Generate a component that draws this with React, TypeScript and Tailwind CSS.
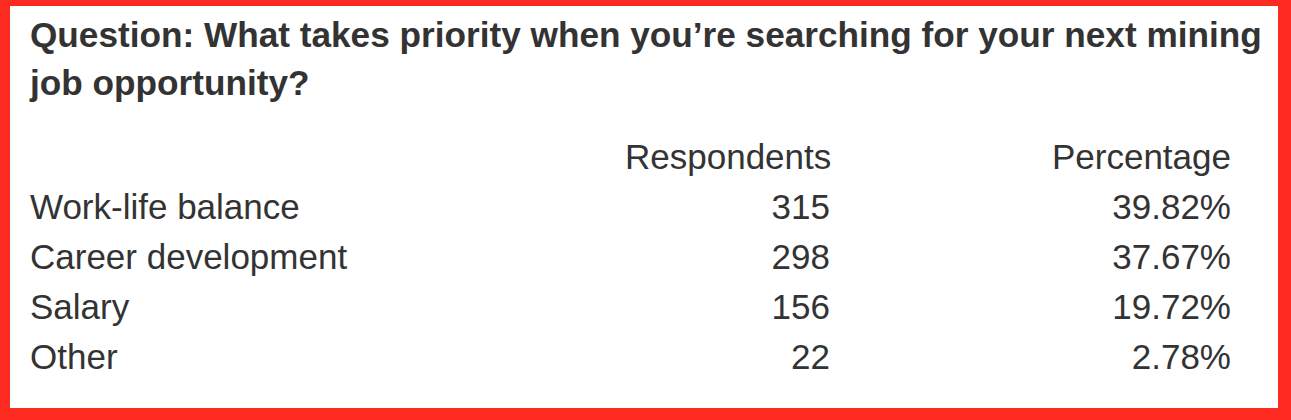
const ROWS = [
  { label: 'Work-life balance', count: 315, pct: '39.82%' },
  { label: 'Career development', count: 298, pct: '37.67%' },
  { label: 'Salary', count: 156, pct: '19.72%' },
  { label: 'Other', count: 22, pct: '2.78%' },
]

export default function App() {
  return (
    <div className="h-[420px] w-[1291px] bg-white font-['Liberation_Sans',Arial,sans-serif] text-[#333333]">
      <div className="h-full border-[#fc2a1f] border-t-[6px] border-l-[10px] border-r-[13px] border-b-[12px] pl-[20px] pr-[6px] pt-[5px]">
        <h2 className="text-[35.2px] font-bold leading-[48px]">
          Question: What takes priority when you’re searching for your next mining job opportunity?
        </h2>
        <div className="mt-[25px] grid grid-cols-[595px_205px_401px] text-[35px] leading-[50px]">
          <div />
          <div className="text-right">Respondents</div>
          <div className="text-right">Percentage</div>
          {ROWS.map((row) => (
            <div key={row.label} className="contents">
              <div>{row.label}</div>
              <div className="text-right">{row.count}</div>
              <div className="text-right">{row.pct}</div>
            </div>
          ))}
        </div>
      </div>
    </div>
  )
}
